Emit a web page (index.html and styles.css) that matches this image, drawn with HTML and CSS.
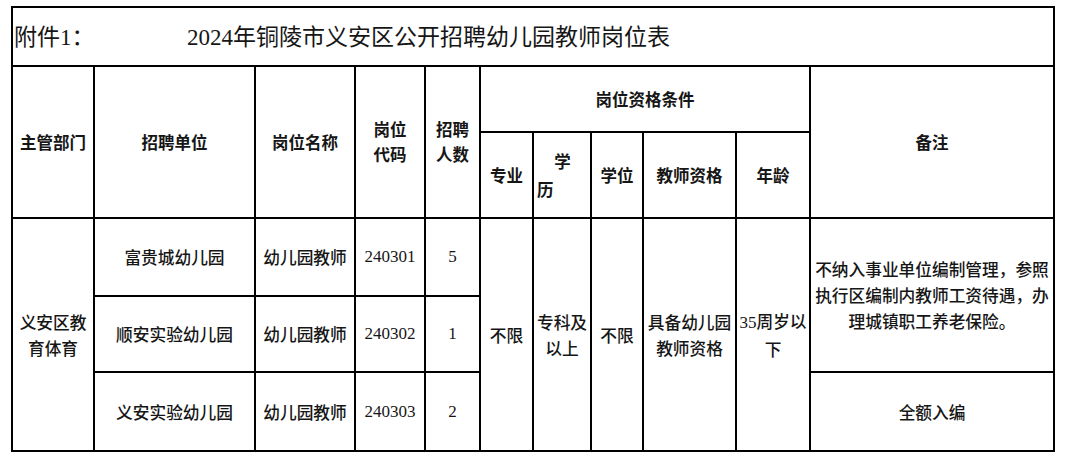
FILE: index.html
```html
<!DOCTYPE html>
<html lang="zh-CN">
<head>
<meta charset="utf-8">
<title>2024年铜陵市义安区公开招聘幼儿园教师岗位表</title>
<link rel="stylesheet" href="styles.css">
</head>
<body>
<div class="sheet">
  <div class="cell title span-all">
    <span class="title-label">附件1：</span>
    <span class="title-text">2024年铜陵市义安区公开招聘幼儿园教师岗位表</span>
  </div>

  <div class="cell head rows-2">主管部门</div>
  <div class="cell head rows-2">招聘单位</div>
  <div class="cell head rows-2">岗位名称</div>
  <div class="cell head rows-2"><span class="txt">岗位<br>代码</span></div>
  <div class="cell head rows-2"><span class="txt">招聘<br>人数</span></div>
  <div class="cell head cols-5">岗位资格条件</div>
  <div class="cell head rows-2">备注</div>

  <div class="cell head">专业</div>
  <div class="cell head split">
    <span class="split-top">学</span>
    <span class="split-bottom">历</span>
  </div>
  <div class="cell head">学位</div>
  <div class="cell head">教师资格</div>
  <div class="cell head">年龄</div>

  <div class="cell rows-3"><span class="txt">义安区教<br>育体育</span></div>
  <div class="cell">富贵城幼儿园</div>
  <div class="cell">幼儿园教师</div>
  <div class="cell num">240301</div>
  <div class="cell num">5</div>
  <div class="cell rows-3">不限</div>
  <div class="cell rows-3"><span class="txt">专科及<br>以上</span></div>
  <div class="cell rows-3">不限</div>
  <div class="cell rows-3"><span class="txt">具备幼儿园<br>教师资格</span></div>
  <div class="cell rows-3"><span class="txt"><span class="num-inline">35</span>周岁以<br>下</span></div>
  <div class="cell rows-2"><span class="txt">不纳入事业单位编制管理，参照<br>执行区编制内教师工资待遇，办<br>理城镇职工养老保险。</span></div>

  <div class="cell">顺安实验幼儿园</div>
  <div class="cell">幼儿园教师</div>
  <div class="cell num">240302</div>
  <div class="cell num">1</div>

  <div class="cell">义安实验幼儿园</div>
  <div class="cell">幼儿园教师</div>
  <div class="cell num">240303</div>
  <div class="cell num">2</div>
  <div class="cell">全额入编</div>
</div>
</body>
</html>
```

FILE: styles.css
```css
html, body {
  margin: 0;
  padding: 0;
  background: #ffffff;
}

body {
  font-family: "Liberation Serif", "Noto Sans CJK SC", serif;
  color: #161616;
}

.sheet {
  display: grid;
  width: fit-content;
  margin: 6px 0 0 11px;
  padding: 2px;
  gap: 2px;
  background: #000000;
  grid-template-columns: 80px 159px 98px 68px 53px 51px 56px 50px 91px 72px 242px;
  grid-template-rows: 57px 64px 84px 76px 74px 77px;
}

.cell {
  background: #ffffff;
  display: flex;
  align-items: center;
  justify-content: center;
  text-align: center;
  font-family: "Noto Sans CJK SC", sans-serif;
  font-size: 16.7px;
  font-weight: 500;
  line-height: 26px;
  white-space: nowrap;
}

.txt {
  display: block;
}

.span-all { grid-column: 1 / -1; }
.rows-2 { grid-row: span 2; }
.rows-3 { grid-row: span 3; }
.cols-5 { grid-column: span 5; }

.title {
  justify-content: flex-start;
  text-align: left;
  font-family: "Liberation Serif", "Noto Sans CJK SC", serif;
  font-size: 23px;
  font-weight: 400;
  line-height: 30px;
  padding: 3px 0 0 1px;
}

.title-label {
  width: 173px;
}

.head {
  font-weight: 700;
  font-size: 16.5px;
  line-height: 25px;
}

.num {
  font-family: "Liberation Serif", serif;
  font-size: 17px;
  font-weight: 400;
}

.num-inline {
  font-family: "Liberation Serif", serif;
  font-size: 17px;
  font-weight: 400;
}

.split {
  flex-direction: column;
  align-items: stretch;
  line-height: 28px;
}

.split-top {
  text-align: center;
  padding-left: 1px;
}

.split-bottom {
  text-align: left;
  padding-left: 3px;
}
```
